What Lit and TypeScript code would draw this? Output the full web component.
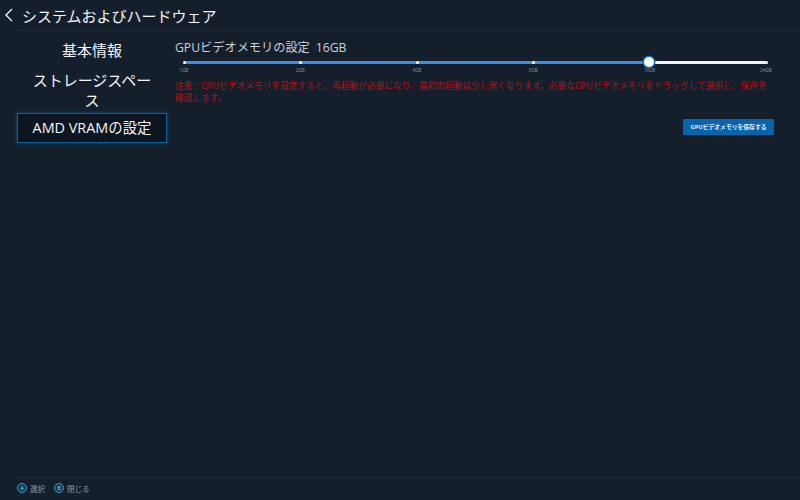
import { LitElement, html, css } from "lit";
import { customElement } from "lit/decorators.js";

const TICKS = [
  { label: "1GB", pct: 0 },
  { label: "2GB", pct: 20 },
  { label: "4GB", pct: 40 },
  { label: "8GB", pct: 60 },
  { label: "16GB", pct: 80 },
  { label: "24GB", pct: 100 },
];

@customElement("app-root")
export class AppRoot extends LitElement {
  static styles = css`
    :host {
      display: flex;
      flex-direction: column;
      width: 800px;
      height: 500px;
      box-sizing: border-box;
      background: #151f2c;
      color: #e8ecf0;
      font-family: "Open Sans", "Noto Sans CJK JP", sans-serif;
      overflow: hidden;
    }
    .head {
      height: 30px;
      flex: none;
      display: flex;
      align-items: center;
      gap: 7px;
      padding-left: 3px;
      box-sizing: border-box;
      font-size: 15px;
      color: #f2f4f6;
    }
    .rule {
      height: 1px;
      background: #232d3a;
      margin-left: 17px;
      flex: none;
    }
    .main {
      flex: 1;
      display: flex;
    }
    .side {
      width: 150px;
      margin-left: 17px;
      flex: none;
      display: flex;
      flex-direction: column;
      padding-top: 7px;
    }
    .item {
      font-size: 15px;
      text-align: center;
      color: #f2f4f6;
      padding: 0 14px;
    }
    .item.one { line-height: 24px; padding-bottom: 6px; }
    .item.two { line-height: 20px; padding: 0 14px 3px; margin-top: 2px; }
    .item.active {
      box-sizing: border-box;
      height: 30px;
      line-height: 27px;
      font-size: 14.4px;
      padding: 0;
      background: #0d1521;
      border: 1.5px solid #0a5c98;
      box-shadow: 0 0 3px #0a5c98;
    }
    .content {
      flex: 1;
      padding: 9px 26px 0 8px;
      display: flex;
      flex-direction: column;
    }
    .title {
      font-size: 12.2px;
      line-height: 16px;
      color: #c9d0d8;
      display: flex;
      gap: 6px;
    }
    .slider {
      position: relative;
      height: 22px;
      margin: 2px 8px 0 9px;
    }
    .track, .fill {
      position: absolute;
      top: 3px;
      height: 3px;
      left: 0;
      border-radius: 2px;
    }
    .track { width: 100%; background: #f2f4f6; }
    .fill { width: 80%; background: #3d8ee0; }
    .dot {
      position: absolute;
      top: 3px;
      width: 3px;
      height: 3px;
      margin-left: -1px;
      border-radius: 50%;
      background: #fff;
    }
    .lab {
      position: absolute;
      top: 9px;
      transform: translateX(-50%);
      font-size: 4.5px;
      line-height: 7px;
      color: #8b939c;
      white-space: nowrap;
    }
    .thumb {
      position: absolute;
      top: -1px;
      left: 80%;
      margin-left: -5.5px;
      width: 10px;
      height: 10px;
      box-sizing: border-box;
      border-radius: 50%;
      background: #fff;
      box-shadow: 0 0 0 1.5px #0a6bc0;
    }
    .note {
      font-size: 8.6px;
      line-height: 12px;
      color: #b80f15;
      margin: 0;
      letter-spacing: 0.12px;
    }
    .actions {
      display: flex;
      justify-content: flex-end;
      margin-top: 15px;
    }
    .save {
      width: 91px;
      height: 16px;
      border: 0;
      padding: 0;
      border-radius: 1px;
      background: #0765ad;
      color: #e6eef5;
      font: inherit;
      font-size: 5.8px;
      font-weight: 700;
      line-height: 16px;
      text-align: center;
    }
    .foot {
      height: 22px;
      flex: none;
      display: flex;
      align-items: center;
      gap: 9px;
      padding: 0 0 2px 17px;
      box-sizing: border-box;
      font-size: 7.5px;
      color: #8f98a2;
    }
    .hint { display: flex; align-items: center; gap: 3px; }
    .glyph {
      width: 10px;
      height: 10px;
      box-sizing: border-box;
      border-radius: 50%;
      border: 1px solid #2f9fd0;
      background: #123a55;
      color: #8fcfe8;
      font-size: 5.5px;
      line-height: 8px;
      text-align: center;
      flex: none;
    }
  `;

  render() {
    return html`
      <div class="head">
        <svg width="12" height="16" viewBox="0 0 12 16" fill="none" stroke="#f2f4f6" stroke-width="1.4">
          <path d="M9 2 L3 8 L9 14" />
        </svg>
        <span>システムおよびハードウェア</span>
      </div>
      <div class="rule"></div>
      <div class="main">
        <nav class="side">
          <div class="item one">基本情報</div>
          <div class="item two">ストレージスペース</div>
          <div class="item active">AMD VRAMの設定</div>
        </nav>
        <section class="content">
          <div class="title"><span>GPUビデオメモリの設定</span><span>16GB</span></div>
          <div class="slider">
            <div class="track"></div>
            <div class="fill"></div>
            ${TICKS.map(
              (t) => html`
                <div class="dot" style="left:${t.pct}%"></div>
                <div class="lab" style="left:${t.pct}%">${t.label}</div>
              `
            )}
            <div class="thumb"></div>
          </div>
          <p class="note">
            注意：GPUビデオメモリを設定すると、再起動が必要になり、最初の起動は少し遅くなります。必要なGPUビデオメモリをドラッグして選択し、保存を確認します。
          </p>
          <div class="actions"><button class="save">GPUビデオメモリを保存する</button></div>
        </section>
      </div>
      <div class="rule"></div>
      <footer class="foot">
        <span class="hint"><span class="glyph">A</span>選択</span>
        <span class="hint"><span class="glyph">B</span>閉じる</span>
      </footer>
    `;
  }
}
